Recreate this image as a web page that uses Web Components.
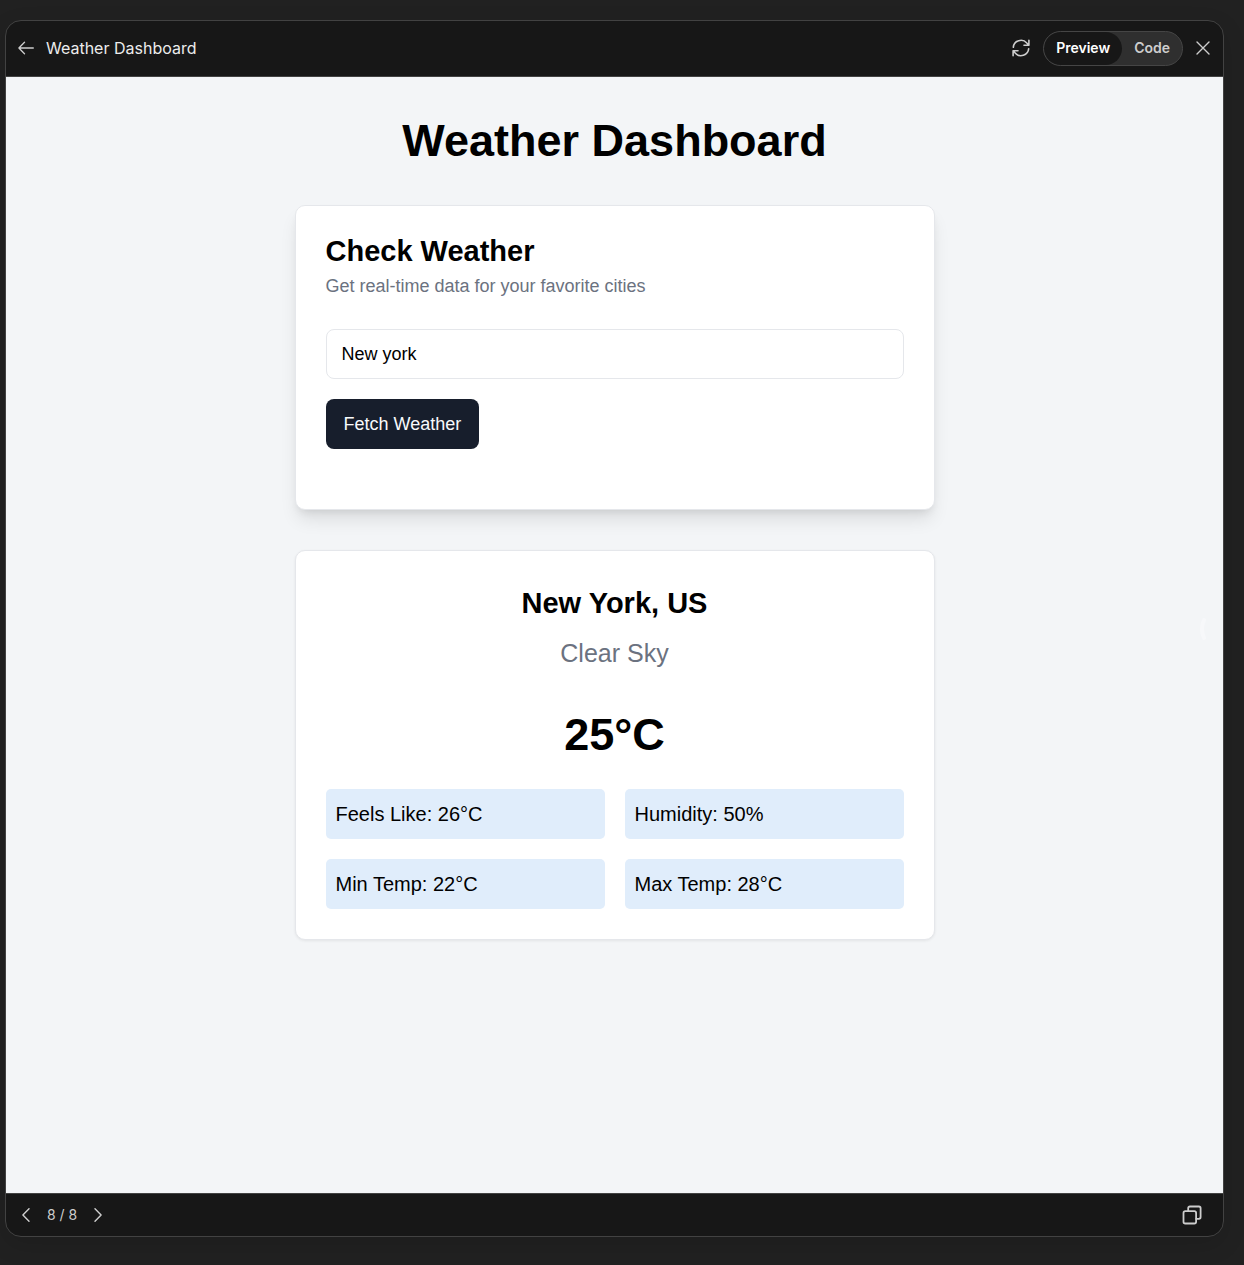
<!DOCTYPE html>
<html lang="en">
<head>
<meta charset="utf-8">
<title>Weather Dashboard</title>
<style>
  html, body { margin: 0; }
  body { background: #212121; font-family: "Liberation Sans", Arial, sans-serif; }
</style>
</head>
<body>
<artifact-window heading="Weather Dashboard" version="8 / 8">
  <weather-app></weather-app>
</artifact-window>

<script>
const reset = `
  *, *::before, *::after { box-sizing: border-box; }
  h1, h2, p, dl, dt, dd { margin: 0; }
  button { font: inherit; color: inherit; background: none; border: 0; padding: 0; cursor: pointer; }
`;

class BaseElement extends HTMLElement {
  connectedCallback() {
    if (this.shadowRoot) return;
    const root = this.attachShadow({ mode: "open" });
    root.innerHTML = `<style>${reset}${this.styles()}</style>${this.markup()}`;
  }
  styles() { return ""; }
  markup() { return "<slot></slot>"; }
}

const icons = {
  back: ["0 0 16 16", 16, `<path d="M15.300 8H.9M6.500 2.300.9 8l5.600 5.700"/>`, 1.3],
  refresh: ["0 0 18 18", 18, `<path d="M16.900 1.300v4.900H12M1.100 16.700v-4.900H6M1.300 8.300A7.700 7.700 0 0 1 14.800 4l2.100 2.200M16.700 9.700A7.700 7.700 0 0 1 3.200 14l-2.100-2.200"/>`, 1.6],
  close: ["0 0 14 14", 14, `<path d="m1 1 12 12M13 1 1 13"/>`, 1.4],
  prev: ["0 0 8 14", 14, `<path d="M7 .7.900 7 7 13.300"/>`, 1.4],
  next: ["0 0 8 14", 14, `<path d="m1 .7 6.100 6.300L1 13.300"/>`, 1.4],
  copy: ["0 0 20 20", 20, `<rect x="1.500" y="6.200" width="12.600" height="12.300" rx="1.800"/><path d="M6.200 6V3.200c0-1 .7-1.700 1.700-1.700h9c1 0 1.700.7 1.700 1.700v8.900c0 1-.7 1.700-1.700 1.700h-2.600"/>`, 1.8]
};

class UiIcon extends BaseElement {
  styles() { return `:host { display: inline-flex; } svg { display: block; fill: none; stroke: currentColor; stroke-linecap: round; stroke-linejoin: round; }`; }
  markup() {
    const [box, height, shape, stroke] = icons[this.getAttribute("name")];
    const width = box.split(" ")[2];
    return `<svg viewBox="${box}" width="${width}" height="${height}" stroke-width="${stroke}" aria-hidden="true">${shape}</svg>`;
  }
}
customElements.define("ui-icon", UiIcon);

class ViewSwitch extends BaseElement {
  styles() { return `
    :host { display: flex; height: 35px; border: 1px solid #454545; border-radius: 18px; background: #2f2f2f; overflow: hidden; }
    button { padding: 0 12px; border-radius: 18px; font: 600 14px/20px Inter, sans-serif; color: #cdcdcd; }
    button[aria-pressed="true"] { background: #171717; color: #fff; }
  `; }
  markup() { return `<button type="button" aria-pressed="true">Preview</button><button type="button" aria-pressed="false">Code</button>`; }
}
customElements.define("view-switch", ViewSwitch);

class ArtifactWindow extends BaseElement {
  styles() { return `
    :host { display: flex; min-height: 100vh; padding: 20px 20px 28px 5px; box-sizing: border-box; font-family: Inter, sans-serif; color: #ececec; }
    .window { flex: 1; display: flex; flex-direction: column; border: 1px solid #424242; border-radius: 16px; background: #171717; overflow: hidden; box-shadow: 0 8px 24px rgba(0,0,0,.12); }
    header, footer { display: flex; align-items: center; justify-content: space-between; color: #cdcdcd; }
    header { height: 56px; padding: 0 13px 1px 12px; border-bottom: 1px solid #424242; }
    footer { height: 43px; padding: 0 21px 0 16px; border-top: 1px solid #424242; }
    .group { display: flex; align-items: center; gap: 12px; }
    .actions { gap: 13px; }
    .pager { display: flex; align-items: center; gap: 17px; font-size: 14px; line-height: 20px; }
    h1 { font-size: 16px; line-height: 24px; font-weight: 400; color: #ececec; }
    button { display: flex; }
    main { flex: 1; display: flex; font-family: "Liberation Sans", Arial, sans-serif; color: #000; background: #f3f5f7; }
    ::slotted(*) { flex: 1; }
  `; }
  markup() { return `
    <section class="window">
      <header>
        <div class="group">
          <button type="button" aria-label="Back"><ui-icon name="back"></ui-icon></button>
          <h1>${this.getAttribute("heading")}</h1>
        </div>
        <div class="group actions">
          <button type="button" aria-label="Refresh"><ui-icon name="refresh"></ui-icon></button>
          <view-switch></view-switch>
          <button type="button" aria-label="Close"><ui-icon name="close"></ui-icon></button>
        </div>
      </header>
      <main><slot></slot></main>
      <footer>
        <div class="pager">
          <button type="button" aria-label="Previous version"><ui-icon name="prev"></ui-icon></button>
          <span>${this.getAttribute("version")}</span>
          <button type="button" aria-label="Next version"><ui-icon name="next"></ui-icon></button>
        </div>
        <button type="button" aria-label="Copy"><ui-icon name="copy"></ui-icon></button>
      </footer>
    </section>`; }
}
customElements.define("artifact-window", ArtifactWindow);

class UiCard extends BaseElement {
  styles() { return `
    :host { display: block; box-sizing: border-box; padding: 30px; background: #fff; border: 1px solid #e5e7eb; border-radius: 10px; box-shadow: 0 1px 3px rgba(0,0,0,.07); }
    :host([raised]) { box-shadow: 0 12px 18px -3px rgba(0,0,0,.1), 0 5px 8px -4px rgba(0,0,0,.1); }
  `; }
}
customElements.define("ui-card", UiCard);

class WeatherForm extends BaseElement {
  styles() { return `
    :host { display: block; }
    h2 { font-size: 29px; line-height: 30px; font-weight: 700; }
    p { margin: 8px 0 30px; font-size: 18px; line-height: 25px; color: #6b7280; }
    form { display: flex; flex-direction: column; align-items: flex-start; gap: 20px; margin-bottom: 30px; }
    input { width: 100%; height: 50px; padding: 0 15px; border: 1px solid #e5e7eb; border-radius: 8px; background: #fff; color: #000; font: inherit; font-size: 18px; outline: 0; }
    button { height: 50px; padding: 0 18px; border-radius: 8px; background: #171e2c; color: #f8fafc; font-size: 18px; }
  `; }
  markup() { return `
    <h2>Check Weather</h2>
    <p id="hint">Get real-time data for your favorite cities</p>
    <form>
      <input type="text" value="New york" aria-labelledby="hint">
      <button type="button">Fetch Weather</button>
    </form>`; }
}
customElements.define("weather-form", WeatherForm);

class WeatherStat extends BaseElement {
  styles() { return `:host { display: block; padding: 10px; border-radius: 5px; background: #e0edfb; font-size: 20px; line-height: 30px; }`; }
}
customElements.define("weather-stat", WeatherStat);

class WeatherReport extends BaseElement {
  styles() { return `
    :host { display: block; text-align: center; }
    h2 { font-size: 29px; line-height: 45px; font-weight: 700; }
    .sky { margin: 10px 0 40px; font-size: 25px; line-height: 35px; color: #6b7280; }
    .temp { margin-bottom: 30px; font-size: 45px; line-height: 48px; font-weight: 700; }
    .stats { display: grid; grid-template-columns: 1fr 1fr; gap: 20px; text-align: left; }
  `; }
  markup() { return `
    <h2>New York, US</h2>
    <p class="sky">Clear Sky</p>
    <p class="temp">25°C</p>
    <div class="stats"><slot></slot></div>`; }
}
customElements.define("weather-report", WeatherReport);

class WeatherApp extends BaseElement {
  styles() { return `
    :host { display: flex; flex-direction: column; align-items: center; gap: 40px; padding: 40px; box-sizing: border-box; position: relative; }
    h1 { font-size: 45px; line-height: 48px; font-weight: 700; text-align: center; }
    ui-card { width: 100%; max-width: 640px; }
    .handle { position: absolute; right: 16px; top: 50%; width: 7px; height: 24px; margin-top: -18px; fill: none; stroke: #f7f8fa; stroke-width: 4; stroke-linecap: round; }
  `; }
  markup() { return `
    <h1>Weather Dashboard</h1>
    <ui-card raised><weather-form></weather-form></ui-card>
    <ui-card>
      <weather-report>
        <weather-stat>Feels Like: 26°C</weather-stat>
        <weather-stat>Humidity: 50%</weather-stat>
        <weather-stat>Min Temp: 22°C</weather-stat>
        <weather-stat>Max Temp: 28°C</weather-stat>
      </weather-report>
    </ui-card>
    <svg class="handle" viewBox="0 0 7 24" aria-hidden="true"><path d="M4 3Q0 12 4 21"/></svg>`; }
}
customElements.define("weather-app", WeatherApp);
</script>
</body>
</html>
